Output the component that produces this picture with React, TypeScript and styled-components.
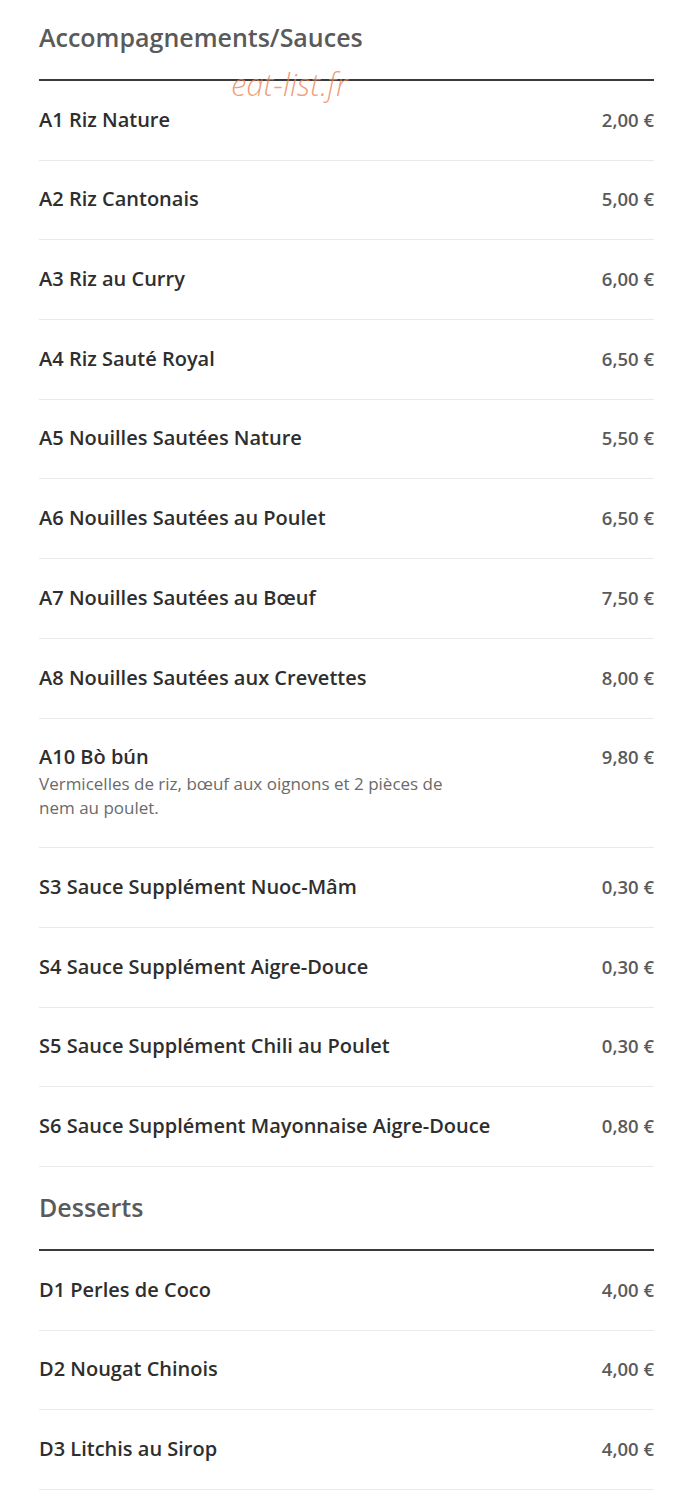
import React from "react";
import styled, { createGlobalStyle } from "styled-components";

const GlobalStyle = createGlobalStyle`
  html, body {
    margin: 0;
    padding: 0;
    background: #ffffff;
  }
  body {
    font-family: "Open Sans", "Noto Sans", sans-serif;
    -webkit-font-smoothing: antialiased;
  }
`;

type MenuItem = {
  code: string;
  name: string;
  price: string;
  description?: string;
};

type MenuSection = {
  id: string;
  title: string;
  items: MenuItem[];
};

const sections: MenuSection[] = [
  {
    id: "accompagnements",
    title: "Accompagnements/Sauces",
    items: [
      { code: "A1", name: "Riz Nature", price: "2,00 €" },
      { code: "A2", name: "Riz Cantonais", price: "5,00 €" },
      { code: "A3", name: "Riz au Curry", price: "6,00 €" },
      { code: "A4", name: "Riz Sauté Royal", price: "6,50 €" },
      { code: "A5", name: "Nouilles Sautées Nature", price: "5,50 €" },
      { code: "A6", name: "Nouilles Sautées au Poulet", price: "6,50 €" },
      { code: "A7", name: "Nouilles Sautées au Bœuf", price: "7,50 €" },
      { code: "A8", name: "Nouilles Sautées aux Crevettes", price: "8,00 €" },
      {
        code: "A10",
        name: "Bò bún",
        price: "9,80 €",
        description:
          "Vermicelles de riz, bœuf aux oignons et 2 pièces de nem au poulet.",
      },
      { code: "S3", name: "Sauce Supplément Nuoc-Mâm", price: "0,30 €" },
      { code: "S4", name: "Sauce Supplément Aigre-Douce", price: "0,30 €" },
      { code: "S5", name: "Sauce Supplément Chili au Poulet", price: "0,30 €" },
      {
        code: "S6",
        name: "Sauce Supplément Mayonnaise Aigre-Douce",
        price: "0,80 €",
      },
    ],
  },
  {
    id: "desserts",
    title: "Desserts",
    items: [
      { code: "D1", name: "Perles de Coco", price: "4,00 €" },
      { code: "D2", name: "Nougat Chinois", price: "4,00 €" },
      { code: "D3", name: "Litchis au Sirop", price: "4,00 €" },
    ],
  },
];

const Page = styled.div`
  position: relative;
  width: 615px;
  padding: 0 40px 0 39px;
`;

const Section = styled.section`
  & + & {
    margin-top: 3px;
  }
`;

const SectionTitle = styled.h2`
  margin: 0;
  padding: 21px 0 25px;
  font-size: 25px;
  line-height: 33px;
  font-weight: 600;
  color: #5a5a5a;
  border-bottom: 2px solid #3a3a3a;
`;

const Row = styled.div`
  display: flex;
  justify-content: space-between;
  align-items: flex-start;
  gap: 24px;
  padding: 25.7px 0 27px;
  border-bottom: 1px solid #e9e9e9;
`;

const Info = styled.div`
  flex: 1;
  min-width: 0;
`;

const Name = styled.div`
  font-size: 20px;
  line-height: 26px;
  font-weight: 600;
  color: #2e2e2e;
`;

const Description = styled.p`
  margin: 2px 0 0;
  max-width: 430px;
  font-size: 17px;
  line-height: 24px;
  color: #6a6a6a;
`;

const Price = styled.div`
  font-size: 18.5px;
  line-height: 26px;
  font-weight: 600;
  color: #5a5a5a;
  white-space: nowrap;
`;

const Watermark = styled.div`
  position: absolute;
  top: 63px;
  left: 231px;
  font-size: 31px;
  line-height: 42px;
  font-style: italic;
  font-weight: 300;
  color: rgba(236, 128, 80, 0.75);
  pointer-events: none;
`;

export default function App() {
  return (
    <>
      <GlobalStyle />
      <Page>
        {sections.map((section) => (
          <Section key={section.id}>
            <SectionTitle>{section.title}</SectionTitle>
            {section.items.map((item) => (
              <Row key={item.code}>
                <Info>
                  <Name>
                    {item.code} {item.name}
                  </Name>
                  {item.description && (
                    <Description>{item.description}</Description>
                  )}
                </Info>
                <Price>{item.price}</Price>
              </Row>
            ))}
          </Section>
        ))}
        <Watermark>eat-list.fr</Watermark>
      </Page>
    </>
  );
}
